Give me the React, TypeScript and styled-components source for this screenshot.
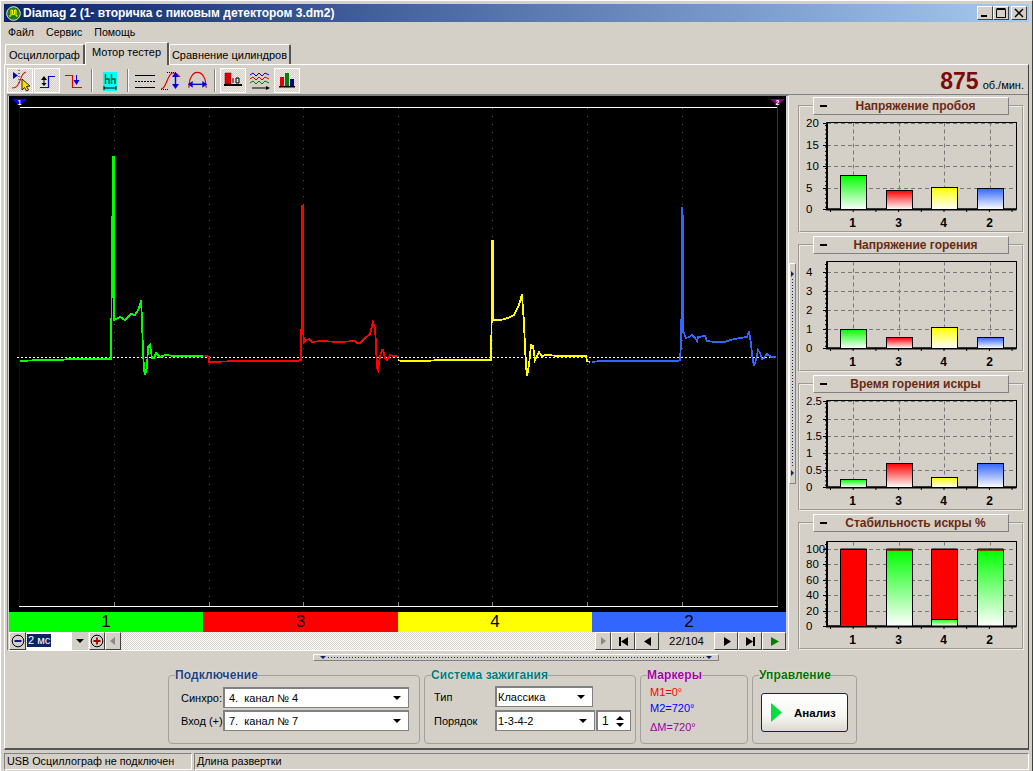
import React from 'react'
import styled, { createGlobalStyle } from 'styled-components'

const FACE = '#d4d0c8'

const GlobalStyle = createGlobalStyle`
    html, body {
        margin: 0;
        padding: 0;
        background: ${FACE};
    }
    * {
        box-sizing: border-box;
    }
`

const Window = styled.div`
    width: 1033px;
    height: 771px;
    padding: 3px 3px 0 3px;
    background: ${FACE};
    border-top: 1px solid #fff;
    border-left: 1px solid #fff;
    border-right: 1px solid #404040;
    display: flex;
    flex-direction: column;
    font-family: "Liberation Sans", Arial, sans-serif;
    font-size: 11px;
    color: #000;
    overflow: hidden;
`

const TitleBar = styled.div`
    height: 18px;
    flex: none;
    display: flex;
    align-items: center;
    padding: 0 2px 0 2px;
    background: linear-gradient(90deg, #0a246a, #a6caf0);
`

const TitleText = styled.span`
    margin-left: 2px;
    color: #fff;
    font-weight: bold;
    font-size: 12px;
    white-space: nowrap;
`

const WindowButtons = styled.div`
    margin-left: auto;
    display: flex;
`

const WindowButton = styled.div<{ $gap?: number }>`
    width: 16px;
    height: 14px;
    margin-left: ${p => p.$gap || 0}px;
    background: ${FACE};
    border: 1px solid;
    border-color: #fff #404040 #404040 #fff;
    display: flex;
    align-items: center;
    justify-content: center;
`

const MenuBar = styled.div`
    height: 20px;
    flex: none;
    display: flex;
    align-items: center;
    padding-left: 4px;
    gap: 12px;
    font-size: 10.6px;
`

const TabStrip = styled.div`
    height: 22px;
    flex: none;
    display: flex;
    align-items: flex-end;
    padding-left: 1px;
    position: relative;
    z-index: 1;
`

const Tab = styled.div<{ $active?: boolean; $width: number }>`
    width: ${p => p.$width}px;
    height: ${p => (p.$active ? 23 : 20)}px;
    margin-bottom: ${p => (p.$active ? -1 : 0)}px;
    padding-top: ${p => (p.$active ? 3 : 4)}px;
    text-align: center;
    background: ${FACE};
    border-top: 1px solid #fff;
    border-left: 1px solid #fff;
    border-right: 2px solid #555;
    border-radius: 2px 2px 0 0;
    font-size: 11px;
    white-space: nowrap;
`

const TabSheet = styled.div`
    height: 686px;
    flex: none;
    display: flex;
    flex-direction: column;
    border-top: 1px solid #fff;
    border-left: 1px solid #fff;
    border-right: 1px solid #404040;
    border-bottom: 2px solid #555;
    padding-left: 2px;
`

const Toolbar = styled.div`
    height: 30px;
    flex: none;
    display: flex;
    align-items: flex-start;
    padding: 3px 4px 0 0;
    border-bottom: 1px solid #808080;
`

const ToolButton = styled.div<{ $pressed?: boolean; $width?: number }>`
    width: ${p => p.$width || 26}px;
    height: 25px;
    margin-right: 1px;
    flex: none;
    border: 1px solid ${p => (p.$pressed ? '#fff' : 'transparent')};
    background: ${p => (p.$pressed ? 'repeating-conic-gradient(#d4d0c8 0 25%, #eeeae6 0 50%) 0 0 / 2px 2px' : 'none')};
    display: flex;
    align-items: center;
    justify-content: center;
`

const ToolSeparator = styled.div`
    width: 2px;
    height: 23px;
    margin: 1px 4px 0 3px;
    flex: none;
    border-left: 1px solid #808080;
    border-right: 1px solid #fff;
`

const Rpm = styled.div`
    margin-left: auto;
    display: flex;
    align-items: baseline;
    gap: 4px;
    height: 24px;
    padding-top: 1px;
`

const RpmValue = styled.span`
    color: #7b0a0a;
    font-weight: bold;
    font-size: 23px;
    line-height: 25px;
`

const RpmUnit = styled.span`
    font-size: 11px;
`

const Workspace = styled.div`
    height: 556px;
    flex: none;
    display: flex;
`

const ScopeColumn = styled.div`
    width: 782px;
    flex: none;
    display: flex;
    flex-direction: column;
    padding-left: 1px;
    border: 1px solid;
    border-color: #808080 #fff #fff #808080;
`

const ScopeSvg = styled.svg`
    display: block;
    flex: none;
    background: #000;
`

const ChannelBar = styled.div`
    height: 20px;
    width: 777px;
    display: grid;
    grid-template-columns: 194px 195px 194px 194px;
    flex: none;
`

const ChannelCell = styled.div<{ $color: string }>`
    background: ${p => p.$color};
    text-align: center;
    font-size: 17px;
    line-height: 20px;
`

const ControlRow = styled.div`
    height: 18px;
    width: 777px;
    flex: none;
    display: flex;
    background: repeating-conic-gradient(#d4d0c8 0 25%, #fff 0 50%) 0 0 / 2px 2px;
`

const SmallButton = styled.div<{ $width?: number; $margin?: number }>`
    width: ${p => p.$width || 16}px;
    height: 18px;
    flex: none;
    margin-left: ${p => p.$margin || 0}px;
    background: ${FACE};
    border: 1px solid;
    border-color: #fff #404040 #404040 #fff;
    display: flex;
    align-items: center;
    justify-content: center;
`

const ScaleCombo = styled.div`
    width: 61px;
    height: 18px;
    margin-left: 1px;
    flex: none;
    display: flex;
    background: #fff;
    padding-top: 2px;
`

const ScaleValue = styled.span`
    height: 13px;
    background: #0a246a;
    color: #fff;
    line-height: 13px;
    font-size: 11px;
    padding: 0 1px;
`

const ComboArrowBox = styled.div`
    margin: -2px 0 0 auto;
    width: 16px;
    height: 18px;
    background: ${FACE};
    display: flex;
    align-items: center;
    justify-content: center;
`

const Triangle = styled.span`
    width: 0;
    height: 0;
    flex: none;
    border-style: solid;
    border-width: 4px 4px 0 4px;
    border-color: #000 transparent transparent transparent;
`

const NavPanel = styled.div`
    margin-left: auto;
    display: flex;
    background: ${FACE};
`

const FrameCounter = styled.div`
    width: 55px;
    line-height: 18px;
    text-align: center;
    font-size: 11.4px;
`

const VSplitter = styled.div`
    width: 7px;
    height: 221px;
    margin-top: 168px;
    flex: none;
    border: 1px solid #808080;
    border-left-color: #fff;
    border-top-color: #fff;
    display: flex;
    flex-direction: column;
    align-items: center;
    justify-content: space-between;
    padding: 7px 0;
`

const DottedV = styled.div`
    flex: 1;
    width: 1px;
    margin: 2px 0;
    background: repeating-linear-gradient(180deg, #0a246a 0 1px, transparent 1px 3px);
`

const SidePanels = styled.div`
    margin-left: 2px;
    padding-top: 2px;
    display: flex;
    flex-direction: column;
    gap: 3px;
`

const ChartPanel = styled.fieldset`
    width: 226px;
    height: 136px;
    margin: 0;
    padding: 0;
    border: 2px groove #f0ece4;
`

const ChartHeader = styled.legend`
    width: 196px;
    height: 18px;
    margin-left: 13px;
    padding: 0 4px 0 6px;
    background: ${FACE};
    border: 1px solid;
    border-color: #fff #808080 #808080 #fff;
    display: flex;
    align-items: center;
    color: #6b2a10;
    font-weight: bold;
    font-size: 12px;
`

const HeaderMinus = styled.span`
    width: 7px;
    height: 2px;
    flex: none;
    background: #000;
`

const HeaderTitle = styled.span`
    flex: 1;
    text-align: center;
`

const ChartSvg = styled.svg`
    display: block;
    margin-top: 1px;
    font-family: "Liberation Sans", Arial, sans-serif;
`

const BottomArea = styled.div`
    flex: 1;
    display: flex;
    flex-direction: column;
`

const HSplitter = styled.div`
    width: 406px;
    height: 7px;
    margin: 3px 0 0 306px;
    flex: none;
    border: 1px solid #808080;
    border-left-color: #fff;
    border-top-color: #fff;
    display: flex;
    align-items: center;
    padding: 0 6px;
`

const DottedH = styled.div`
    flex: 1;
    height: 1px;
    margin: 0 2px;
    background: repeating-linear-gradient(90deg, #0a246a 0 1px, transparent 1px 3px);
`

const ArrowGlyph = styled.span<{ $dir: 'down' | 'right' }>`
    width: 0;
    height: 0;
    flex: none;
    border-style: solid;
    border-color: transparent;
    ${p => (p.$dir === 'down'
        ? 'border-width: 3px 3px 0 3px; border-top-color: #0a246a;'
        : 'border-width: 3px 0 3px 3px; border-left-color: #0a246a;')}
`

const GroupRow = styled.div`
    display: flex;
    gap: 4px;
    margin: 7px 0 0 161px;
`

const Group = styled.fieldset<{ $width: number }>`
    width: ${p => p.$width}px;
    height: 76px;
    margin: 0;
    padding: 0;
    border: 1px solid #a0a09c;
    border-radius: 4px;
`

const GroupTitle = styled.legend<{ $color: string }>`
    margin-left: 6px;
    padding: 0;
    color: ${p => p.$color};
    font-weight: bold;
    font-size: 12px;
    line-height: 14px;
    letter-spacing: 0.1px;
    text-shadow: 0 0 1px #fff;
`

const FormGrid = styled.div<{ $columns: string; $left: number; $top: number; $gap: number }>`
    display: grid;
    grid-template-columns: ${p => p.$columns};
    row-gap: ${p => p.$gap}px;
    align-items: center;
    margin: ${p => p.$top}px 0 0 ${p => p.$left}px;
    white-space: nowrap;
`

const FieldRow = styled.div`
    display: flex;
    gap: 1px;
`

const Combo = styled.div<{ $width: number; $pad?: number }>`
    width: ${p => p.$width}px;
    height: 21px;
    padding: 0 7px 0 ${p => p.$pad ?? 1}px;
    background: #fff;
    border: 1px solid #808080;
    border-top-width: 2px;
    border-left-width: 2px;
    display: flex;
    align-items: center;
    justify-content: space-between;
    font-size: 11px;
    white-space: pre;
`

const Spin = styled.div`
    width: 35px;
    height: 21px;
    padding: 0 6px 0 4px;
    background: #fff;
    border: 1px solid #808080;
    border-top-width: 2px;
    border-left-width: 2px;
    display: flex;
    align-items: center;
    justify-content: space-between;
    font-size: 12px;
`

const SpinArrows = styled.div`
    display: flex;
    flex-direction: column;
    gap: 3px;
`

const UpTriangle = styled.span`
    display: block;
    width: 0;
    height: 0;
    border-style: solid;
    border-width: 0 4px 4px 4px;
    border-color: transparent transparent #000 transparent;
`

const MarkerList = styled.div`
    margin: 3px 0 0 9px;
    display: flex;
    flex-direction: column;
`

const MarkerLine = styled.div<{ $color: string; $height: number }>`
    color: ${p => p.$color};
    font-size: 11px;
    height: ${p => p.$height}px;
    line-height: 15px;
`

const AnalyzeButton = styled.div`
    width: 87px;
    height: 39px;
    margin: 11px 0 0 8px;
    border: 1px solid #0a246a;
    border-radius: 3px;
    background: linear-gradient(180deg, #ffffff 0%, #f6f6f2 60%, #dcd9d0 100%);
    display: flex;
    align-items: center;
    padding-left: 9px;
    font-weight: bold;
    font-size: 11.5px;
    gap: 12px;
`

const StatusBar = styled.div`
    height: 18px;
    flex: none;
    margin-top: 3px;
    display: flex;
    gap: 2px;
`

const StatusCell = styled.div<{ $width?: number }>`
    width: ${p => (p.$width ? `${p.$width}px` : 'auto')};
    flex: ${p => (p.$width ? 'none' : '1')};
    height: 17px;
    padding: 1px 2px 0;
    border: 1px solid;
    border-color: #808080 #fff #fff #808080;
    font-size: 10.8px;
    white-space: nowrap;
`

const GREEN = '#00ff00'
const RED = '#ff0000'
const YELLOW = '#ffff00'
const BLUE = '#3366ff'

const tracePoints = {
    green: '20,361 40,360 60,360 70,359 108,359 111,359 112,260 113,157 114,157 114,285 114,320 116,319 120,317 125,320 131,314 135,315 138,310 140,305 141,300 142,320 143,352 144,369 145,375 147,367 148,347 150,345 152,358 154,358 156,353 160,357 165,355 175,356 190,356 203,356',
    red: '205,356 207,356 209,358 209,362 240,361 297,361 301,360 302,285 302,206 303,206 303,330 304,342 306,340 309,339 312,342 320,341 340,342 355,341 357,343 360,343 365,338 370,334 373,322 375,328 376,345 377,368 378,370 380,356 382,350 383,350 385,358 387,360 390,355 393,356 397,356',
    yellow: '398,360 401,361 410,361 425,361 440,360 490,360 491,360 492,300 492,241 493,241 493,320 495,320 500,320 505,319 510,317 514,315 518,307 520,302 522,294 523,310 524,322 525,348 526,365 527,376 529,365 531,345 533,346 535,360 537,356 539,352 542,356 546,355 560,356 586,356 587,361 590,362',
    blue: '592,362 600,361 620,361 640,361 678,361 680,360 681,343 682,285 682,207 683,220 683,331 686,338 689,337 692,335 695,338 697,341 698,337 705,336 707,341 715,342 725,342 730,340 740,338 747,337 749,331 751,343 752,355 754,366 756,360 758,350 760,353 762,359 764,358 767,354 771,357 776,357',
}

const vTicks = [114, 209, 303, 398, 492, 587, 682]

function ScopeTraces() {
    return (
        <ScopeSvg width={777} height={516} viewBox="9 96 777 516">
            <line x1={19} y1={107.5} x2={778} y2={107.5} stroke="#fff" />
            <line x1={19} y1={606.5} x2={778} y2={606.5} stroke="#fff" />
            {vTicks.map(x => (
                <g key={x}>
                    <line x1={x + 0.5} y1={108} x2={x + 0.5} y2={601} stroke="#5a5a5a" strokeDasharray="1 7" />
                    <line x1={x + 0.5} y1={602} x2={x + 0.5} y2={606} stroke="#888" />
                </g>
            ))}
            <line x1={19.5} y1={100} x2={19.5} y2={606} stroke="#0000b0" />
            <line x1={777.5} y1={100} x2={777.5} y2={606} stroke="#800080" />
            <polygon points="12,99 27,99 19.5,106" fill="#0000ff" />
            <text x={19.5} y={104.5} fontSize={7} fontWeight="bold" fill="#fff" textAnchor="middle" fontFamily="Liberation Sans">1</text>
            <polygon points="770,99 785,99 777.5,106" fill="#800080" />
            <text x={777.5} y={104.5} fontSize={7} fontWeight="bold" fill="#fff" textAnchor="middle" fontFamily="Liberation Sans">2</text>
            <line x1={17} y1={357.5} x2={776} y2={357.5} stroke="#fff" strokeDasharray="2 2" />
            <g fill="none" strokeWidth={1.8} shapeRendering="crispEdges">
                <polyline points={tracePoints.green} stroke={GREEN} />
                <polyline points={tracePoints.red} stroke={RED} />
                <polyline points={tracePoints.yellow} stroke={YELLOW} />
                <polyline points={tracePoints.blue} stroke={BLUE} />
            </g>
        </ScopeSvg>
    )
}

type Tick = { label: string; y: number }
type ChartData = {
    title: string
    top: number
    ticks: Tick[]
    bars: { top: number; redTo?: number }[]
}

const barSlots = [
    { x: 841, width: 26, color: 'g', label: '1' },
    { x: 887, width: 26, color: 'r', label: '3' },
    { x: 932, width: 26, color: 'y', label: '4' },
    { x: 978, width: 26, color: 'b', label: '2' },
]

const charts: ChartData[] = [
    {
        title: 'Напряжение пробоя',
        top: 122.5,
        ticks: [
            { label: '20', y: 123 }, { label: '15', y: 145 }, { label: '10', y: 166 },
            { label: '5', y: 188 }, { label: '0', y: 209 },
        ],
        bars: [{ top: 175 }, { top: 190 }, { top: 187 }, { top: 188 }],
    },
    {
        title: 'Напряжение горения',
        top: 122.5,
        ticks: [
            { label: '4', y: 133 }, { label: '3', y: 152 }, { label: '2', y: 171 },
            { label: '1', y: 190 }, { label: '0', y: 209 },
        ],
        bars: [{ top: 190 }, { top: 198 }, { top: 188 }, { top: 198 }],
    },
    {
        title: 'Время горения искры',
        top: 122.5,
        ticks: [
            { label: '2.5', y: 123 }, { label: '2', y: 141 }, { label: '1.5', y: 158 },
            { label: '1', y: 175 }, { label: '0.5', y: 192 }, { label: '0', y: 209 },
        ],
        bars: [{ top: 201 }, { top: 185 }, { top: 199 }, { top: 185 }],
    },
    {
        title: 'Стабильность искры %',
        top: 124.5,
        ticks: [
            { label: '100', y: 132 }, { label: '80', y: 147 }, { label: '60', y: 163 },
            { label: '40', y: 178 }, { label: '20', y: 194 }, { label: '0', y: 209 },
        ],
        bars: [{ top: 132, redTo: 209 }, { top: 132, redTo: 133 }, { top: 132, redTo: 202 }, { top: 132, redTo: 133 }],
    },
]

function Chart({ data, id }: { data: ChartData; id: number }) {
    const left = 827
    const right = 1016.5
    const bottom = 209
    const minor: number[] = []
    for (let y = data.top + 3; y < bottom; y += 4.3) minor.push(y)
    const xTicks: number[] = []
    for (let x = 830.5; x < right; x += 22.7) xTicks.push(x)

    return (
        <ChartSvg width={222} height={114} viewBox="800 116 222 114">
            <defs>
                {[['g', GREEN], ['r', RED], ['y', YELLOW], ['b', BLUE]].map(([k, c]) => (
                    <linearGradient key={k} id={`grad-${id}-${k}`} x1="0" y1="0" x2="0" y2="1">
                        <stop offset="0" stopColor={c} />
                        <stop offset="1" stopColor="#fff" />
                    </linearGradient>
                ))}
            </defs>
            {data.ticks.map(t => (
                <g key={t.label}>
                    <line x1={left} y1={t.y + 0.5} x2={right} y2={t.y + 0.5} stroke="#777" strokeDasharray="4 3" />
                    <line x1={823} y1={t.y + 0.5} x2={left} y2={t.y + 0.5} stroke="#000" />
                    <text x={806} y={t.y + 4} fontSize={11.5} fill="#000">{t.label}</text>
                </g>
            ))}
            {barSlots.map(s => (
                <line key={s.x} x1={s.x + 12.5} y1={data.top} x2={s.x + 12.5} y2={bottom} stroke="#777" strokeDasharray="4 3" />
            ))}
            {minor.map(y => (
                <line key={y} x1={825} y1={y} x2={827} y2={y} stroke="#000" />
            ))}
            {xTicks.map(x => (
                <line key={x} x1={x} y1={bottom} x2={x} y2={bottom + 3} stroke="#000" />
            ))}
            <rect x={827} y={data.top} width={right - 827} height={bottom - data.top} fill="none" stroke="#000" />
            <rect x={826} y={data.top} width={2} height={bottom - data.top + 1} fill="#000" />
            <rect x={826} y={bottom - 0.5} width={right - 826} height={2} fill="#000" />
            {barSlots.map((s, i) => {
                const bar = data.bars[i]
                const redTo = bar.redTo
                const barFill = `url(#grad-${id}-${s.color})`
                if (redTo === undefined) {
                    return (
                        <rect key={s.x} x={s.x - 0.5} y={bar.top + 0.5} width={s.width} height={bottom - bar.top} fill={barFill} stroke="#000" />
                    )
                }
                return (
                    <g key={s.x}>
                        {redTo < bottom && (
                            <rect x={s.x - 0.5} y={redTo} width={s.width} height={bottom - redTo} fill={`url(#grad-${id}-g)`} stroke="#000" />
                        )}
                        <rect x={s.x - 0.5} y={bar.top + 0.5} width={s.width} height={redTo - bar.top} fill={RED} stroke={redTo - bar.top < 3 ? 'none' : '#000'} />
                        <line x1={s.x - 0.5} y1={bar.top} x2={s.x + s.width - 0.5} y2={bar.top} stroke="#000" />
                    </g>
                )
            })}
            {barSlots.map(s => (
                <text key={s.label} x={s.x + 11.5} y={227} fontSize={12} fontWeight="bold" textAnchor="middle" fill="#000">{s.label}</text>
            ))}
        </ChartSvg>
    )
}

function AppLogo() {
    return (
        <svg width="15" height="15" viewBox="0 0 15 15">
            <circle cx="7.5" cy="7.5" r="6.8" fill="#1f7a1f" stroke="#e8e8c0" strokeWidth="1" />
            <path d="M3 10H5V4H6.5V8.5H8.5V4H10V10H12" fill="none" stroke="#ffff00" strokeWidth="1" />
        </svg>
    )
}

function CursorIcon() {
    return (
        <svg width="24" height="23" viewBox="0 0 24 23">
            <polygon points="5,3 5,10 10,6.5" fill="#0000d0" />
            <path d="M11 1V14" stroke="#000" strokeDasharray="1 2" />
            <path d="M4 19C10 19 11 14 13 9C14 6 15 4 18 3" fill="none" stroke="#d02020" strokeWidth="1.2" />
            <polygon points="14,10 14,21 16.5,18.5 18.5,22 20.5,21 18.5,17.5 22,17" fill="#ffe000" stroke="#000" strokeWidth="0.8" />
        </svg>
    )
}

function StepUpIcon() {
    return (
        <svg width="24" height="23" viewBox="0 0 24 23">
            <path d="M5 18.5H13.5V7.5H20" fill="none" stroke="#0000d0" strokeWidth="1.2" />
            <path d="M9 9V16" stroke="#000" strokeWidth="1" />
            <polygon points="6,11 12,11 9,7" fill="#000" />
            <polygon points="6.5,14 11.5,14 9,17" fill="#000" />
        </svg>
    )
}

function StepDownIcon() {
    return (
        <svg width="24" height="23" viewBox="0 0 24 23">
            <path d="M3 6.5H10.5V18.5H20" fill="none" stroke="#e00000" strokeWidth="1.2" />
            <path d="M14.5 6V14" stroke="#0000d0" strokeWidth="1" />
            <polygon points="11.5,11 17.5,11 14.5,16" fill="#0000d0" />
        </svg>
    )
}

function MeasureIcon() {
    return (
        <svg width="16" height="23" viewBox="0 0 16 23">
            <rect x="1" y="3" width="14" height="19" fill="#00ffff" />
            <path d="M3.5 5V15M3.5 10H7V15M9.5 5V15M9.5 10H13V15" fill="none" stroke="#006000" strokeWidth="1.4" />
            <path d="M2 19H14M2 17V21M14 17V21" stroke="#000" fill="none" />
        </svg>
    )
}

function LevelLinesIcon() {
    return (
        <svg width="20" height="23" viewBox="0 0 20 23">
            <path d="M0 6.5H20M0 18.5H20" stroke="#000" />
            <path d="M0 12.5H20" stroke="#000" strokeDasharray="2 1" />
        </svg>
    )
}

function AmplitudeIcon() {
    return (
        <svg width="24" height="23" viewBox="0 0 24 23">
            <path d="M2 20.5H10M8 3.5H18" stroke="#000" strokeDasharray="1 1" />
            <path d="M2 20C8 20 8 4 14 4C17 4 19 5 21 8" fill="none" stroke="#e00000" strokeWidth="1.2" />
            <path d="M16.5 6V17" stroke="#0000e0" strokeWidth="1.4" />
            <polygon points="13,8 20,8 16.5,3" fill="#0000e0" />
            <polygon points="13,15 20,15 16.5,20" fill="#0000e0" />
        </svg>
    )
}

function SpanIcon() {
    return (
        <svg width="24" height="23" viewBox="0 0 24 23">
            <path d="M3 19C3 9 7 3 12 3C17 3 21 9 21 19" fill="none" stroke="#e00000" strokeWidth="1.2" />
            <path d="M5 15.5H19" stroke="#0000e0" strokeWidth="1.4" />
            <polygon points="7,12 7,19 2,15.5" fill="#0000e0" />
            <polygon points="17,12 17,19 22,15.5" fill="#0000e0" />
        </svg>
    )
}

function SingleBarIcon() {
    return (
        <svg width="22" height="23" viewBox="0 0 22 23">
            <rect x="3" y="4" width="6" height="11" fill="#e00000" stroke="#600000" strokeWidth="0.5" />
            <rect x="2" y="15" width="18" height="2" fill="#000" />
            <path d="M11 9V14M14 9H17V14H14Z" fill="none" stroke="#000" strokeWidth="1" />
        </svg>
    )
}

function WavesIcon() {
    return (
        <svg width="22" height="23" viewBox="0 0 22 23">
            <path d="M1 6L4 4L7 7L10 4L13 7L16 4L20 6" fill="none" stroke="#0000e0" />
            <path d="M1 10L4 8L7 11L10 8L13 11L16 8L20 10" fill="none" stroke="#e00000" />
            <path d="M1 14L4 12L7 15L10 12L13 15L16 12L20 14" fill="none" stroke="#008000" />
            <path d="M3 19H18" stroke="#000" />
            <polygon points="17,17 17,21 21,19" fill="#000" />
        </svg>
    )
}

function TripleBarIcon() {
    return (
        <svg width="22" height="23" viewBox="0 0 22 23">
            <rect x="4" y="8" width="4" height="9" fill="#e00000" />
            <rect x="9" y="4" width="4" height="13" fill="#008000" />
            <rect x="14" y="10" width="4" height="7" fill="#000080" />
            <rect x="3" y="17" width="16" height="1.5" fill="#000" />
        </svg>
    )
}

function ZoomIcon({ plus }: { plus?: boolean }) {
    const color = plus ? '#a00000' : '#000080'
    return (
        <svg width="14" height="14" viewBox="0 0 14 14">
            <circle cx="7" cy="7" r="5.8" fill="none" stroke="#000" />
            <path d={plus ? 'M3.5 7H10.5M7 3.5V10.5' : 'M3.5 7H10.5'} stroke={color} strokeWidth="1.8" />
        </svg>
    )
}

function NavIcon({ kind }: { kind: 'first' | 'prev' | 'next' | 'last' | 'play' }) {
    const shapes = {
        first: <><rect x="2" y="2" width="2" height="9" fill="#000" /><polygon points="4,6.5 11,2 11,11" fill="#000" /></>,
        prev: <polygon points="3,6.5 10,2 10,11" fill="#000" />,
        next: <polygon points="4,2 11,6.5 4,11" fill="#000" />,
        last: <><polygon points="2,2 9,6.5 2,11" fill="#000" /><rect x="9" y="2" width="2" height="9" fill="#000" /></>,
        play: <polygon points="3,2 11,6.5 3,11" fill="#008000" />,
    }
    return <svg width="13" height="13" viewBox="0 0 13 13">{shapes[kind]}</svg>
}

export default function App() {
    return (
        <Window>
            <GlobalStyle />
            <TitleBar>
                <AppLogo />
                <TitleText>Diamag 2 (1- вторичка с пиковым детектором 3.dm2)</TitleText>
                <WindowButtons>
                    <WindowButton>
                        <svg width="10" height="10" viewBox="0 0 10 10"><rect x="1" y="7" width="6" height="2" fill="#000" /></svg>
                    </WindowButton>
                    <WindowButton>
                        <svg width="10" height="10" viewBox="0 0 10 10"><path d="M0.5 1.5H9.5V9.5H0.5ZM0.5 0.5H9.5" fill="none" stroke="#000" /></svg>
                    </WindowButton>
                    <WindowButton $gap={2}>
                        <svg width="10" height="10" viewBox="0 0 10 10"><path d="M1 1L9 9M9 1L1 9" stroke="#000" strokeWidth="1.5" /></svg>
                    </WindowButton>
                </WindowButtons>
            </TitleBar>
            <MenuBar>
                <span>Файл</span>
                <span>Сервис</span>
                <span>Помощь</span>
            </MenuBar>
            <TabStrip>
                <Tab $width={80}>Осциллограф</Tab>
                <Tab $width={84} $active>Мотор тестер</Tab>
                <Tab $width={122}>Сравнение цилиндров</Tab>
            </TabStrip>
            <TabSheet>
                <Toolbar>
                    <ToolButton $pressed><CursorIcon /></ToolButton>
                    <ToolButton $pressed><StepUpIcon /></ToolButton>
                    <ToolButton><StepDownIcon /></ToolButton>
                    <ToolSeparator />
                    <ToolButton $width={26}><MeasureIcon /></ToolButton>
                    <ToolSeparator />
                    <ToolButton $width={24}><LevelLinesIcon /></ToolButton>
                    <ToolButton $width={26}><AmplitudeIcon /></ToolButton>
                    <ToolButton $width={25}><SpanIcon /></ToolButton>
                    <ToolSeparator />
                    <ToolButton $pressed><SingleBarIcon /></ToolButton>
                    <ToolButton><WavesIcon /></ToolButton>
                    <ToolButton $pressed><TripleBarIcon /></ToolButton>
                    <Rpm>
                        <RpmValue>875</RpmValue>
                        <RpmUnit>об./мин.</RpmUnit>
                    </Rpm>
                </Toolbar>
                <Workspace>
                    <ScopeColumn>
                        <ScopeTraces />
                        <ChannelBar>
                            <ChannelCell $color={GREEN}>1</ChannelCell>
                            <ChannelCell $color={RED}>3</ChannelCell>
                            <ChannelCell $color={YELLOW}>4</ChannelCell>
                            <ChannelCell $color={BLUE}>2</ChannelCell>
                        </ChannelBar>
                        <ControlRow>
                            <SmallButton $width={17}><ZoomIcon /></SmallButton>
                            <ScaleCombo>
                                <ScaleValue>2 мс</ScaleValue>
                                <ComboArrowBox><Triangle /></ComboArrowBox>
                            </ScaleCombo>
                            <SmallButton $width={16} $margin={1}><ZoomIcon plus /></SmallButton>
                            <SmallButton $width={16}>
                                <svg width="8" height="10" viewBox="0 0 8 10"><polygon points="6,1 6,9 1,5" fill="#888" /></svg>
                            </SmallButton>
                            <NavPanel>
                                <SmallButton $width={16}>
                                    <svg width="8" height="10" viewBox="0 0 8 10"><polygon points="2,1 2,9 7,5" fill="#888" /></svg>
                                </SmallButton>
                                <SmallButton $width={24}><NavIcon kind="first" /></SmallButton>
                                <SmallButton $width={24}><NavIcon kind="prev" /></SmallButton>
                                <FrameCounter>22/104</FrameCounter>
                                <SmallButton $width={24}><NavIcon kind="next" /></SmallButton>
                                <SmallButton $width={24}><NavIcon kind="last" /></SmallButton>
                                <SmallButton $width={24}><NavIcon kind="play" /></SmallButton>
                            </NavPanel>
                        </ControlRow>
                    </ScopeColumn>
                    <VSplitter>
                        <ArrowGlyph $dir="right" />
                        <DottedV />
                        <ArrowGlyph $dir="right" />
                    </VSplitter>
                    <SidePanels>
                        {charts.map((c, i) => (
                            <ChartPanel key={c.title}>
                                <ChartHeader>
                                    <HeaderMinus />
                                    <HeaderTitle>{c.title}</HeaderTitle>
                                </ChartHeader>
                                <Chart data={c} id={i} />
                            </ChartPanel>
                        ))}
                    </SidePanels>
                </Workspace>
                <BottomArea>
                    <HSplitter>
                        <ArrowGlyph $dir="down" />
                        <DottedH />
                        <ArrowGlyph $dir="down" />
                    </HSplitter>
                    <GroupRow>
                        <Group $width={252}>
                            <GroupTitle $color="#1f3f80">Подключение</GroupTitle>
                            <FormGrid $columns="42px auto" $left={12} $top={5} $gap={2}>
                                <span>Синхро:</span>
                                <Combo $width={186} $pad={4}>{'4.  канал № 4'}<Triangle /></Combo>
                                <span>Вход (+):</span>
                                <Combo $width={186} $pad={4}>{'7.  канал № 7'}<Triangle /></Combo>
                            </FormGrid>
                        </Group>
                        <Group $width={212}>
                            <GroupTitle $color="#007a7a">Система зажигания</GroupTitle>
                            <FormGrid $columns="61px auto" $left={9} $top={4} $gap={3}>
                                <span>Тип</span>
                                <Combo $width={98}>Классика<Triangle /></Combo>
                                <span>Порядок</span>
                                <FieldRow>
                                    <Combo $width={100}>1-3-4-2<Triangle /></Combo>
                                    <Spin>
                                        1
                                        <SpinArrows><UpTriangle /><Triangle /></SpinArrows>
                                    </Spin>
                                </FieldRow>
                            </FormGrid>
                        </Group>
                        <Group $width={108}>
                            <GroupTitle $color="#a000a0">Маркеры</GroupTitle>
                            <MarkerList>
                                <MarkerLine $color="#ff0000" $height={16}>М1=0°</MarkerLine>
                                <MarkerLine $color="#0000ff" $height={19}>М2=720°</MarkerLine>
                                <MarkerLine $color="#a000a0" $height={15}>ΔМ=720°</MarkerLine>
                            </MarkerList>
                        </Group>
                        <Group $width={105}>
                            <GroupTitle $color="#007000">Управление</GroupTitle>
                            <AnalyzeButton>
                                <svg width="11" height="19" viewBox="0 0 11 19"><polygon points="0,0 11,9.5 0,19" fill="#00e040" /></svg>
                                Анализ
                            </AnalyzeButton>
                        </Group>
                    </GroupRow>
                </BottomArea>
            </TabSheet>
            <StatusBar>
                <StatusCell $width={188}>USB Осциллограф не подключен</StatusCell>
                <StatusCell>Длина развертки</StatusCell>
            </StatusBar>
        </Window>
    )
}
